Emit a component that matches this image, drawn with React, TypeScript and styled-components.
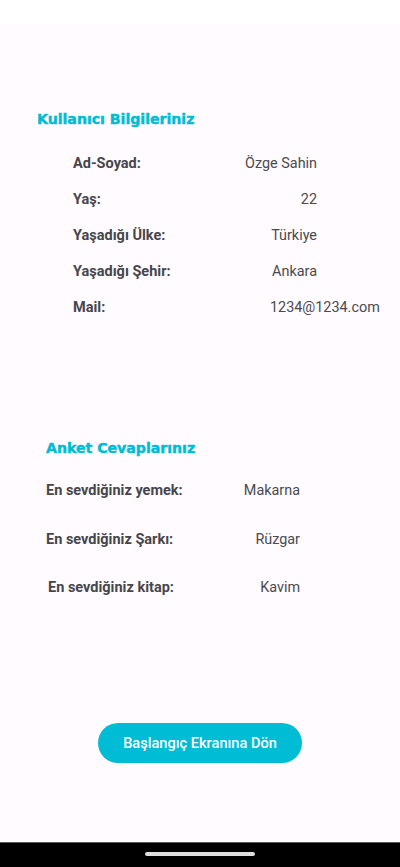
import React from "react";
import styled, { createGlobalStyle } from "styled-components";

const Global = createGlobalStyle`
  html, body { margin: 0; padding: 0; }
  body { background: #fffbfe; font-family: Roboto, "Noto Sans", sans-serif; }
  * { box-sizing: border-box; }
`;

const Screen = styled.div`
  width: 400px;
  height: 867px;
  display: flex;
  flex-direction: column;
  background: #fffbfe;
  overflow: hidden;
`;

const StatusBar = styled.div`
  height: 24px;
  background: #ffffff;
  flex-shrink: 0;
`;

const Main = styled.main`
  flex: 1;
  display: flex;
  flex-direction: column;
  padding-top: 85px;
`;

const Section = styled.section<{ $pad: number; $gap: number; $top?: number }>`
  display: flex;
  flex-direction: column;
  padding-left: ${(p) => p.$pad}px;
  margin-top: ${(p) => p.$top ?? 0}px;
  gap: ${(p) => p.$gap}px;
`;

const Heading = styled.h2<{ $after: number }>`
  margin: 0 0 ${(p) => p.$after}px 0;
  font-family: "DejaVu Sans", sans-serif;
  font-weight: 700;
  font-size: 14.2px;
  line-height: 20px;
  height: 20px;
  color: #00bcd4;
  -webkit-text-stroke: 0.45px #00bcd4;
  letter-spacing: -0.05px;
  white-space: nowrap;
`;

const Row = styled.div<{ $indent: number; $labelW: number }>`
  display: grid;
  grid-template-columns: ${(p) => p.$labelW}px auto;
  padding-left: ${(p) => p.$indent}px;
  height: 20px;
  align-items: baseline;
`;

const Label = styled.span<{ $shift?: number }>`
  font-family: Roboto, sans-serif;
  font-weight: 700;
  font-size: 14.5px;
  line-height: 20px;
  color: #46464c;
  white-space: nowrap;
  padding-left: ${(p) => p.$shift ?? 0}px;
`;

const Value = styled.span<{ $w: number; $align: "left" | "right"; $shift?: number }>`
  font-family: Roboto, sans-serif;
  font-weight: 400;
  font-size: 14.4px;
  line-height: 20px;
  color: #4a4a50;
  width: ${(p) => p.$w}px;
  text-align: ${(p) => p.$align};
  padding-left: ${(p) => p.$shift ?? 0}px;
  white-space: nowrap;
  overflow: visible;
  direction: ${(p) => (p.$align === "right" ? "rtl" : "ltr")};
  unicode-bidi: plaintext;
`;

const ButtonWrap = styled.div`
  display: flex;
  justify-content: center;
  margin-top: 125px;
`;

const Button = styled.button`
  width: 204px;
  height: 40px;
  border: none;
  border-radius: 20px;
  background: #00bcd4;
  color: #ffffff;
  font-family: Roboto, sans-serif;
  font-weight: 500;
  font-size: 14.6px;
  padding: 0;
  cursor: pointer;
`;

const NavBar = styled.div`
  height: 25px;
  background: #000000;
  border-top: 1px solid #5a5a5a;
  flex-shrink: 0;
  display: flex;
  justify-content: center;
  padding-top: 9px;
`;

const Handle = styled.div`
  width: 110px;
  height: 4px;
  border-radius: 2px;
  background: #dedede;
`;

type Item = { label: string; value: string; align: "left" | "right"; shift?: number; lshift?: number };

const user: Item[] = [
  { label: "Ad-Soyad:", value: "Özge Sahin", align: "right" },
  { label: "Yaş:", value: "22", align: "right" },
  { label: "Yaşadığı Ülke:", value: "Türkiye", align: "right" },
  { label: "Yaşadığı Şehir:", value: "Ankara", align: "right" },
  { label: "Mail:", value: "1234@1234.com", align: "left", shift: 25 },
];

const survey: Item[] = [
  { label: "En sevdiğiniz yemek:", value: "Makarna", align: "right" },
  { label: "En sevdiğiniz Şarkı:", value: "Rüzgar", align: "right" },
  { label: "En sevdiğiniz kitap:", value: "Kavim", align: "right", lshift: 2 },
];

export default function App() {
  return (
    <>
      <Global />
      <Screen>
        <StatusBar />
        <Main>
          <Section $pad={37} $gap={16}>
            <Heading $after={9}>Kullanıcı Bilgileriniz</Heading>
            {user.map((u) => (
              <Row key={u.label} $indent={36} $labelW={172}>
                <Label>{u.label}</Label>
                <Value $w={72} $align={u.align} $shift={u.shift}>
                  {u.value}
                </Value>
              </Row>
            ))}
          </Section>
          <Section $pad={46} $gap={28.5} $top={120}>
            <Heading $after={-5.5}>Anket Cevaplarınız</Heading>
            {survey.map((s) => (
              <Row key={s.label} $indent={0} $labelW={194}>
                <Label $shift={s.lshift}>{s.label}</Label>
                <Value $w={60} $align={s.align}>
                  {s.value}
                </Value>
              </Row>
            ))}
          </Section>
          <ButtonWrap>
            <Button>Başlangıç Ekranına Dön</Button>
          </ButtonWrap>
        </Main>
        <NavBar>
          <Handle />
        </NavBar>
      </Screen>
    </>
  );
}
